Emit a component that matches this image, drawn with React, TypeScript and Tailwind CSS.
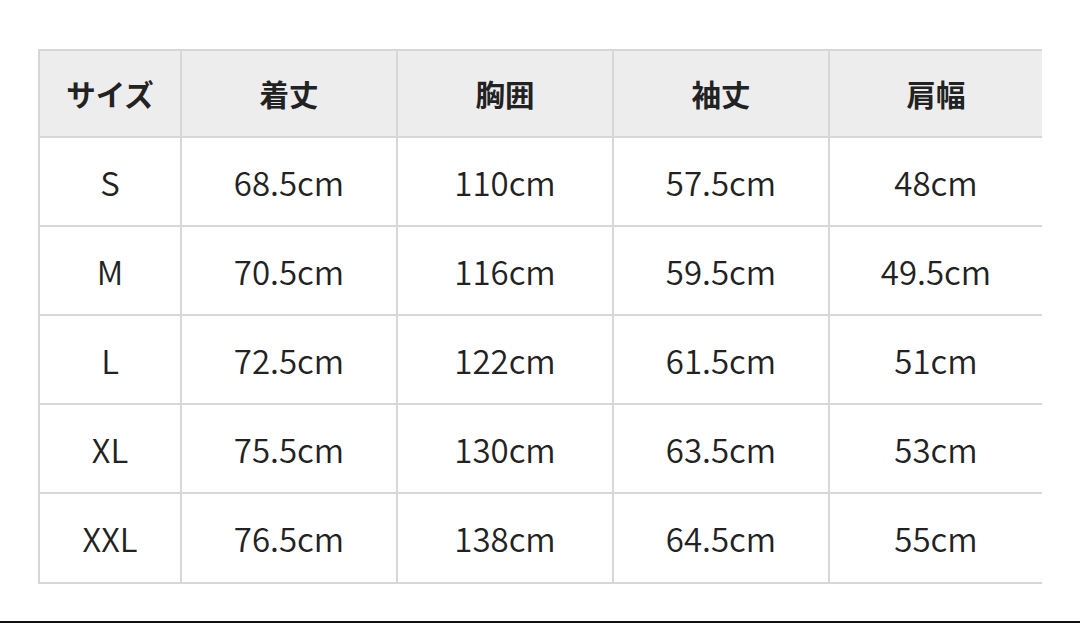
const headers = ['サイズ', '着丈', '胸囲', '袖丈', '肩幅'];

const rows = [
  ['S', '68.5cm', '110cm', '57.5cm', '48cm'],
  ['M', '70.5cm', '116cm', '59.5cm', '49.5cm'],
  ['L', '72.5cm', '122cm', '61.5cm', '51cm'],
  ['XL', '75.5cm', '130cm', '63.5cm', '53cm'],
  ['XXL', '76.5cm', '138cm', '64.5cm', '55cm'],
];

const colWidths = ['w-[142px]', 'w-[216px]', 'w-[216px]', 'w-[216px]', 'w-[214px]'];

export default function App() {
  return (
    <div
      className="w-[1080px] h-[623px] bg-white flex flex-col text-[#222]"
      style={{ fontFamily: '"Noto Sans CJK JP", "Noto Sans", sans-serif' }}
    >
      <div className="pl-[38px] pt-[49px]">
        {/* header row */}
        <div className="flex">
          {headers.map((h, i) => (
            <div
              key={h}
              className={`${colWidths[i]} h-[87px] border-t-2 border-l-2 border-[#d7d7d7] bg-[#ededed] flex items-center justify-center text-[29.5px] font-bold`}
            >
              {h}
            </div>
          ))}
        </div>
        {rows.map((r, ri) => (
          <div key={r[0]} className="flex">
            {r.map((c, i) => (
              <div
                key={i}
                className={`${colWidths[i]} ${ri === rows.length - 1 ? 'h-[92px] border-b-2' : 'h-[89px]'} border-t-2 border-l-2 border-[#d7d7d7] flex items-center justify-center pt-[2px] text-[33px] font-[350]`}
              >
                {c}
              </div>
            ))}
          </div>
        ))}
      </div>
      <div className="mt-auto h-[2px] bg-[#111]" />
    </div>
  );
}
